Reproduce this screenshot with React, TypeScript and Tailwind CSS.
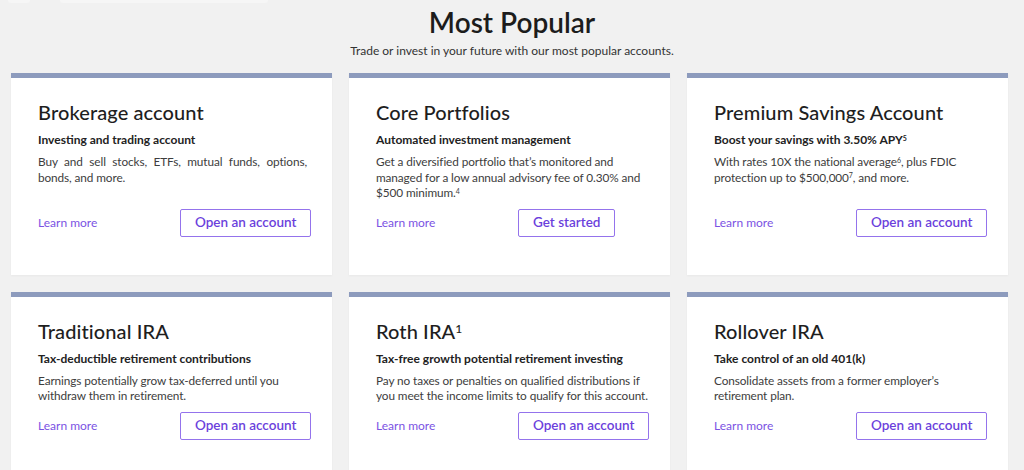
import React from 'react';

interface Account {
  title: string;
  titleSup?: string;
  subtitle: React.ReactNode;
  body: React.ReactNode;
  cta: string;
  justify?: boolean;
}

const accounts: Account[] = [
  {
    title: 'Brokerage account',
    subtitle: 'Investing and trading account',
    body: 'Buy and sell stocks, ETFs, mutual funds, options, bonds, and more.',
    cta: 'Open an account',
    justify: true,
  },
  {
    title: 'Core Portfolios',
    subtitle: 'Automated investment management',
    body: (
      <>
        Get a diversified portfolio that’s monitored and managed for a low annual advisory fee of 0.30% and $500 minimum.
        <sup className="text-[7px]">4</sup>
      </>
    ),
    cta: 'Get started',
  },
  {
    title: 'Premium Savings Account',
    subtitle: (
      <>
        Boost your savings with 3.50% APY<sup className="text-[7px]">5</sup>
      </>
    ),
    body: (
      <>
        With rates 10X the national average<sup className="text-[7px]">6</sup>, plus FDIC protection up to $500,000
        <sup className="text-[7px]">7</sup>, and more.
      </>
    ),
    cta: 'Open an account',
  },
  {
    title: 'Traditional IRA',
    subtitle: 'Tax-deductible retirement contributions',
    body: 'Earnings potentially grow tax-deferred until you withdraw them in retirement.',
    cta: 'Open an account',
  },
  {
    title: 'Roth IRA',
    titleSup: '1',
    subtitle: 'Tax-free growth potential retirement investing',
    body: 'Pay no taxes or penalties on qualified distributions if you meet the income limits to qualify for this account.',
    cta: 'Open an account',
  },
  {
    title: 'Rollover IRA',
    subtitle: 'Take control of an old 401(k)',
    body: 'Consolidate assets from a former employer’s retirement plan.',
    cta: 'Open an account',
  },
];

function AccountCard({ a }: { a: Account }) {
  return (
    <div className="flex flex-col bg-white border-t-[5px] border-[#8d9bbd] pl-[27px] pr-[21px] pt-[22px] pb-[38px] shadow-[0_1px_2px_rgba(0,0,0,0.04)]">
      <h3 className="text-[20px] leading-[24px] font-medium text-[#1e1e1e] tracking-[0.1px]">
        {a.title}
        {a.titleSup && <sup className="text-[12px]">{a.titleSup}</sup>}
      </h3>
      <p className="mt-[8px] text-[12px] leading-[16px] font-bold text-[#222]">{a.subtitle}</p>
      <p
        className={`mt-[6px] text-[11.8px] leading-[15.5px] tracking-[-0.1px] text-[#3d3d3d] ${
          a.justify ? 'text-justify mr-[4px]' : ''
        }`}
      >
        {a.body}
      </p>
      <div className="mt-auto pt-[8px] flex items-center">
        <a className="w-[142px] shrink-0 text-[12px] text-[#7b52e3] cursor-pointer">Learn more</a>
        <button className="h-[28px] px-[14px] whitespace-nowrap border border-[#9473ec] rounded-[2px] text-[13.5px] font-semibold text-[#6b3fdc] bg-white">
          {a.cta}
        </button>
      </div>
    </div>
  );
}

export default function App() {
  return (
    <div className="min-h-screen bg-[#f1f1f1] font-['Lato',sans-serif] overflow-hidden">
      <div className="flex h-[3px] gap-[30px] pl-[8px]">
        <div className="w-[22px] h-[3px] rounded-b-full bg-[#f6f6f6]" />
        <div className="w-[208px] h-[3px] rounded-b-full bg-[#f6f6f6]" />
      </div>
      <h1 className="mt-[2px] text-center text-[28px] leading-[34px] font-semibold text-[#1c1c1c]">Most Popular</h1>
      <p className="mt-[4px] text-center text-[12px] leading-[16px] text-[#333]">
        Trade or invest in your future with our most popular accounts.
      </p>
      <div className="grid grid-cols-3 gap-x-[17px] gap-y-[17px] pl-[11px] pr-[16px] mt-[14px]">
        {accounts.map((a) => (
          <AccountCard key={a.title} a={a} />
        ))}
      </div>
    </div>
  );
}
